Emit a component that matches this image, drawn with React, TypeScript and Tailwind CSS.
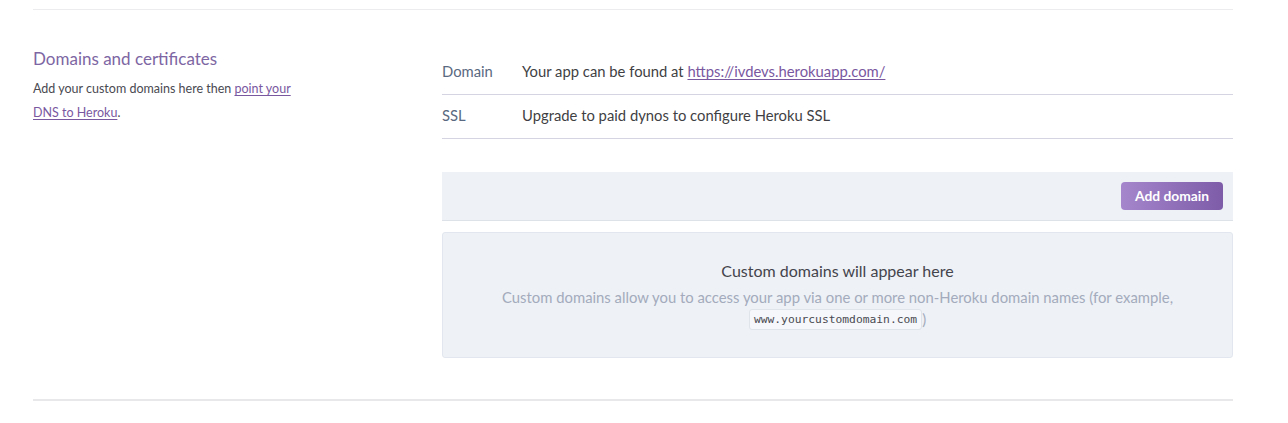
import React from "react";

export default function App() {
  return (
    <div className="w-[1288px] h-[423px] bg-white font-['Lato','Noto_Sans',sans-serif] text-[#3f3f44]">
      <div className="pt-[9px] px-[33px] w-[1266px]">
        <div className="border-t border-[#ececef] flex pt-[41px] pb-[41px] border-b-2 border-b-[#e8e8ea]">
          <div className="w-[409px] shrink-0">
            <h2 className="text-[17px] leading-[16px] text-[#7d66a3] font-normal">
              Domains and certificates
            </h2>
            <p className="mt-[10px] text-[12.5px] leading-[24px] text-[#4a4a52] w-[270px]">
              Add your custom domains here then{" "}
              <a href="#" className="text-[#79589f] underline underline-offset-2">
                point your DNS to Heroku
              </a>
              .
            </p>
          </div>
          <div className="flex-1">
            <div className="flex items-center h-[44px] pb-[2px] border-b border-[#d4d4e2] text-[14.8px]">
              <div className="w-[80px] text-[#596981]">Domain</div>
              <div>
                Your app can be found at{" "}
                <a href="#" className="text-[#79589f] underline underline-offset-2">
                  https://ivdevs.herokuapp.com/
                </a>
              </div>
            </div>
            <div className="flex items-center h-[44px] pb-[3px] border-b border-[#d4d4e2] text-[14.8px]">
              <div className="w-[80px] text-[#596981]">SSL</div>
              <div>Upgrade to paid dynos to configure Heroku SSL</div>
            </div>
            <div className="mt-[33px] h-[49px] bg-[#eef1f6] border-b border-[#dde1e8] flex items-start justify-end pt-[10px] pr-[10px]">
              <button className="h-[28px] w-[102px] rounded-[4px] bg-gradient-to-r from-[#a586cc] to-[#7e5ca8] text-white text-[13.8px] font-bold">
                Add domain
              </button>
            </div>
            <div className="mt-[11px] h-[126px] bg-[#eef1f6] border border-[#e2e6ee] rounded-[3px] flex flex-col items-center pt-[28px] text-center">
              <div className="text-[16px] leading-[20px] text-[#44444c]">
                Custom domains will appear here
              </div>
              <div className="mt-[5px] text-[14.85px] leading-[22px] text-[#a3abbc]">
                Custom domains allow you to access your app via one or more non-Heroku domain names (for example,
                <br />
                <code className="inline-block font-['DejaVu_Sans_Mono',monospace] text-[11.3px] leading-[19px] px-[4px] bg-[#f5f7fa] border border-[#dfe3ea] rounded-[3px] text-[#4a4a52] align-[2px]">
                  www.yourcustomdomain.com
                </code>
                )
              </div>
            </div>
          </div>
        </div>
      </div>
    </div>
  );
}
